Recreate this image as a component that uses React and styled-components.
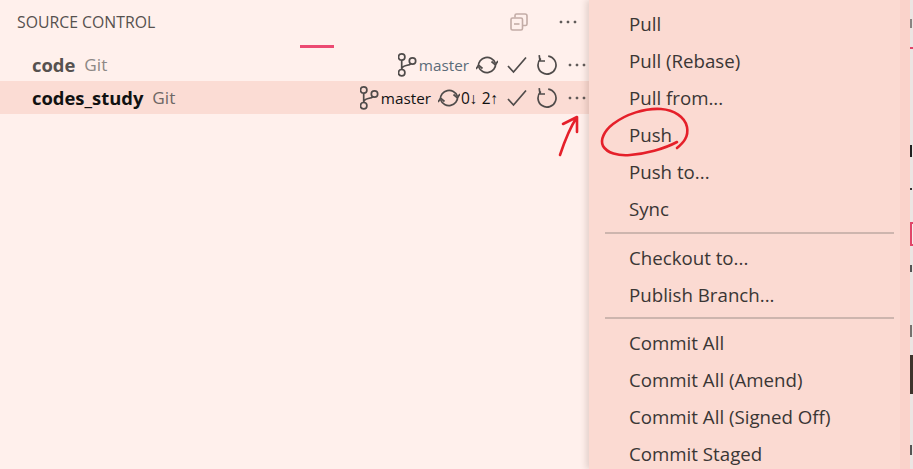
import styled, { createGlobalStyle } from 'styled-components';

const topItems = ['Pull', 'Pull (Rebase)', 'Pull from...', 'Push', 'Push to...', 'Sync'];
const branchItems = ['Checkout to...', 'Publish Branch...'];
const commitItems = ['Commit All', 'Commit All (Amend)', 'Commit All (Signed Off)', 'Commit Staged'];

// slivers of the window behind the menu, top is the gap to the previous one
const edgeMarks = [
  { top: 19, height: 9, color: '#8a8583', width: 2 },
  { top: 19, height: 2, color: '#e0466a', width: 3 },
  { top: 96, height: 12, color: '#222222', width: 2 },
  { top: 31, height: 2, color: '#333333', width: 2 },
  { top: 32, height: 24, color: '#e0466a', width: 3, hollow: true },
  { top: 19, height: 7, color: '#555555', width: 2 },
  { top: 53, height: 12, color: '#77726f', width: 2 },
  { top: 18, height: 39, color: '#3d342c', width: 3 },
  { top: 51, height: 10, color: '#555555', width: 2 },
];

const GlobalStyle = createGlobalStyle`
  html, body {
    margin: 0;
    padding: 0;
    background: #fff0ec;
  }
  body {
    font-family: "Open Sans", "Noto Sans", sans-serif;
    overflow: hidden;
  }
`;

const Screen = styled.div`
  position: relative;
  display: flex;
  width: 913px;
  height: 469px;
  overflow: hidden;
`;

const Panel = styled.div`
  width: 589px;
  flex-shrink: 0;
  background: #fff0ec;
`;

const PanelHeader = styled.div`
  display: flex;
  align-items: center;
  box-sizing: border-box;
  height: 45px;
  padding: 0 11px 2px 17px;
  color: #56514f;
  font-size: 15.8px;
`;

const HeaderTitle = styled.span`
  flex: 1;
`;

const HeaderIcons = styled.div`
  display: flex;
  align-items: center;
  gap: 30px;
`;

const ProgressTrack = styled.div`
  height: 3px;
  padding-left: 300px;
`;

const ProgressBar = styled.div`
  width: 34px;
  height: 3px;
  background: #ec4a72;
`;

const RepoRow = styled.div`
  display: flex;
  align-items: center;
  height: 33px;
  padding: 0 2px 0 32px;
  background: ${p => (p.$selected ? '#fbdcd4' : 'transparent')};
  color: ${p => (p.$selected ? '#111111' : '#56514f')};
`;

const RepoName = styled.span`
  font-size: 18.4px;
  font-weight: 700;
`;

const RepoKind = styled.span`
  flex: 1;
  margin-left: 9px;
  font-size: 17.2px;
  color: ${p => (p.$selected ? '#6d6765' : '#8d8886')};
`;

const Actions = styled.div`
  display: flex;
  align-items: center;
`;

const BranchLabel = styled.span`
  margin: 0 7px 0 2px;
  font-size: 15.3px;
  color: ${p => (p.$selected ? '#111111' : '#5b6b78')};
`;

const SyncCounts = styled.span`
  width: 37px;
  margin-left: 1px;
  font-size: 15.5px;
  white-space: nowrap;
  color: #111111;
`;

const IconSlot = styled.svg`
  display: block;
  flex-shrink: 0;
  fill: none;
  stroke: ${p => p.$color || '#4f4b4a'};
  stroke-width: ${p => p.$stroke || 1.7};
  margin-left: ${p => p.$left || 0}px;
`;

const Menu = styled.div`
  width: 311px;
  flex-shrink: 0;
  box-sizing: border-box;
  padding: 5px 6px 0 16px;
  background: #fbdad2;
  box-shadow: -3px 0 6px rgba(90, 50, 40, 0.16);
  color: #3a3635;
`;

const MenuItem = styled.div`
  display: flex;
  align-items: center;
  height: 37px;
  padding-left: 24px;
  font-size: 18.7px;
  white-space: nowrap;
`;

const MenuSeparator = styled.div`
  height: 2px;
  margin: 5px 0;
  background: #cdb5ae;

  & ~ & {
    margin-top: 4px;
  }
`;

const MenuEdge = styled.div`
  width: 10px;
  flex-shrink: 0;
  background: #fad3cb;
`;

const RightStrip = styled.div`
  display: flex;
  flex-direction: column;
  width: 3px;
  flex-shrink: 0;
  background: #ece5e3;
`;

const EdgeMark = styled.div`
  flex-shrink: 0;
  box-sizing: border-box;
  width: ${p => p.$width}px;
  height: ${p => p.$height}px;
  margin-top: ${p => p.$top}px;
  background: ${p => (p.$hollow ? '#f5ecea' : p.$color)};
  border: ${p => (p.$hollow ? `2px solid ${p.$color}` : 'none')};
  border-right: none;
`;

const Annotations = styled.svg`
  position: absolute;
  top: 0;
  left: 0;
  pointer-events: none;
  fill: none;
  stroke: #e5202a;
  stroke-width: 2.6;
  stroke-linecap: round;
  stroke-linejoin: round;
`;

const BranchIcon = () => (
  <IconSlot width="19" height="26" viewBox="0 0 19 26">
    <circle cx="3.700" cy="5" r="3.200" />
    <circle cx="3.700" cy="20.700" r="3.200" />
    <circle cx="14.500" cy="9" r="3.200" />
    <path d="M3.700 8.200v9.300M3.700 17.500c0-2.500 2-3.500 4.500-4 2.500-.5 4-.8 4.800-1.800" />
  </IconSlot>
);

const SyncIcon = () => (
  <IconSlot width="22" height="20" viewBox="0 0 22 20">
    <path d="M2.300 11.500A8.800 8.800 0 0 1 19.300 8" />
    <path d="M15.500 6.500L19.300 9.800L22 6" />
    <path d="M19.700 8.500A8.800 8.800 0 0 1 2.700 12" />
    <path d="M6.500 13.500L2.700 10.200L0 14" />
  </IconSlot>
);

const CheckIcon = () => (
  <IconSlot width="20" height="18" viewBox="0 0 20 18" $left={9}>
    <path d="M1 10l5.500 6L19 1.500" />
  </IconSlot>
);

const RefreshIcon = () => (
  <IconSlot width="20" height="20" viewBox="0 0 20 20" $left={10}>
    <path d="M3.800 3.500A9 9 0 1 0 11.200 1.100" />
    <path d="M2.200 0.200L3 6H8" />
  </IconSlot>
);

const EllipsisIcon = ({ left }) => (
  <IconSlot width="20" height="6" viewBox="0 0 20 6" $left={left} $stroke={0.6}>
    <circle cx="3" cy="3" r="1.100" fill="#4f4b4a" />
    <circle cx="10" cy="3" r="1.100" fill="#4f4b4a" />
    <circle cx="17" cy="3" r="1.100" fill="#4f4b4a" />
  </IconSlot>
);

const CollapseIcon = () => (
  <IconSlot width="18" height="18" viewBox="0 0 18 18" $color="#c3aca6" $stroke={1.6}>
    <rect x="1" y="5" width="11.500" height="12" rx="1.500" />
    <path d="M5 4.500V2.500C5 1.500 5.700 1 6.500 1h8.500c1 0 2 .7 2 2v8c0 1-.7 1.500-1.500 1.500h-2.500" />
    <path d="M4 11h5.500" />
  </IconSlot>
);

const App = () => (
  <Screen>
    <GlobalStyle />
    <Panel>
      <PanelHeader>
        <HeaderTitle>SOURCE CONTROL</HeaderTitle>
        <HeaderIcons>
          <CollapseIcon />
          <EllipsisIcon />
        </HeaderIcons>
      </PanelHeader>
      <ProgressTrack>
        <ProgressBar />
      </ProgressTrack>
      <RepoRow>
        <RepoName>code</RepoName>
        <RepoKind>Git</RepoKind>
        <Actions>
          <BranchIcon />
          <BranchLabel>master</BranchLabel>
          <SyncIcon />
          <CheckIcon />
          <RefreshIcon />
          <EllipsisIcon left={10} />
        </Actions>
      </RepoRow>
      <RepoRow $selected>
        <RepoName>codes_study</RepoName>
        <RepoKind $selected>Git</RepoKind>
        <Actions>
          <BranchIcon />
          <BranchLabel $selected>master</BranchLabel>
          <SyncIcon />
          <SyncCounts>0↓ 2↑</SyncCounts>
          <CheckIcon />
          <RefreshIcon />
          <EllipsisIcon left={10} />
        </Actions>
      </RepoRow>
    </Panel>
    <Menu>
      {topItems.map(item => <MenuItem key={item}>{item}</MenuItem>)}
      <MenuSeparator />
      {branchItems.map(item => <MenuItem key={item}>{item}</MenuItem>)}
      <MenuSeparator />
      {commitItems.map(item => <MenuItem key={item}>{item}</MenuItem>)}
    </Menu>
    <MenuEdge />
    <RightStrip>
      {edgeMarks.map((mark, i) => (
        <EdgeMark
          key={i}
          $top={mark.top}
          $height={mark.height}
          $color={mark.color}
          $width={mark.width}
          $hollow={mark.hollow}
        />
      ))}
    </RightStrip>
    <Annotations width="913" height="469" viewBox="0 0 913 469">
      <path d="M677 148C683 143 689 137 687 127C685 117 674 110 661 109C645 108 626 114 613 124C604 131 600 140 603 146C607 153 618 156 630 155C645 154 664 149 677 142" />
      <path d="M560 155C564 143 569 129 577 117M563 124L577 117L577 132" />
    </Annotations>
  </Screen>
);

export default App;
